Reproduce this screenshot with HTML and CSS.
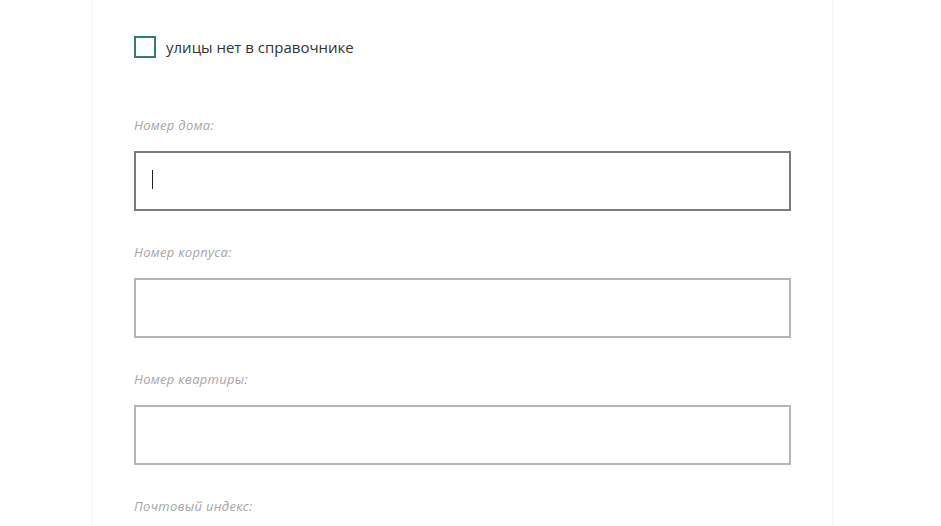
FILE: index.html
```html
<!DOCTYPE html>
<html lang="ru">
<head>
<meta charset="utf-8">
<link rel="stylesheet" href="styles.css">
</head>
<body>
<div class="page">
  <div class="card">
    <label class="check">
      <span class="box"></span>
      <span class="check-text">улицы нет в справочнике</span>
    </label>
    <div class="field">
      <div class="label">Номер дома:</div>
      <div class="input focused"><span class="caret"></span></div>
    </div>
    <div class="field">
      <div class="label">Номер корпуса:</div>
      <div class="input"></div>
    </div>
    <div class="field">
      <div class="label">Номер квартиры:</div>
      <div class="input"></div>
    </div>
    <div class="field">
      <div class="label">Почтовый индекс:</div>
      <div class="input"></div>
    </div>
  </div>
</div>
</body>
</html>
```

FILE: styles.css
```css
html, body {
  margin: 0;
  padding: 0;
  background: #ffffff;
  height: 100%;
  overflow: hidden;
}
.page {
  padding-left: 93px;
}
.card {
  width: 739px;
  box-sizing: border-box;
  padding: 36px 41px 40px;
  background: #fff;
  box-shadow: 0 0 3px rgba(0, 0, 0, 0.09);
  min-height: 600px;
  font-family: "Open Sans", "Noto Sans", sans-serif;
}
.check {
  display: flex;
  align-items: center;
  gap: 10px;
  height: 22px;
}
.box {
  width: 22px;
  height: 22px;
  box-sizing: border-box;
  border: 2px solid #2f7f6c;
  background: #fff;
}
.check-text {
  font-size: 15px;
  color: #333333;
}
.field {
  margin-top: 57px;
}
.field + .field {
  margin-top: 31px;
}
.label {
  height: 20px;
  line-height: 20px;
  font-size: 13px;
  letter-spacing: 0.3px;
  font-style: italic;
  color: #a6a6a6;
  margin-bottom: 16px;
}
.input {
  height: 60px;
  box-sizing: border-box;
  border: 2px solid #b5b5b5;
  background: #fff;
  padding-left: 16px;
  display: flex;
  align-items: center;
}
.input.focused {
  border-color: #7b7b7b;
}
.caret {
  width: 1px;
  height: 19px;
  margin-top: -4px;
  background: #222;
}
```
